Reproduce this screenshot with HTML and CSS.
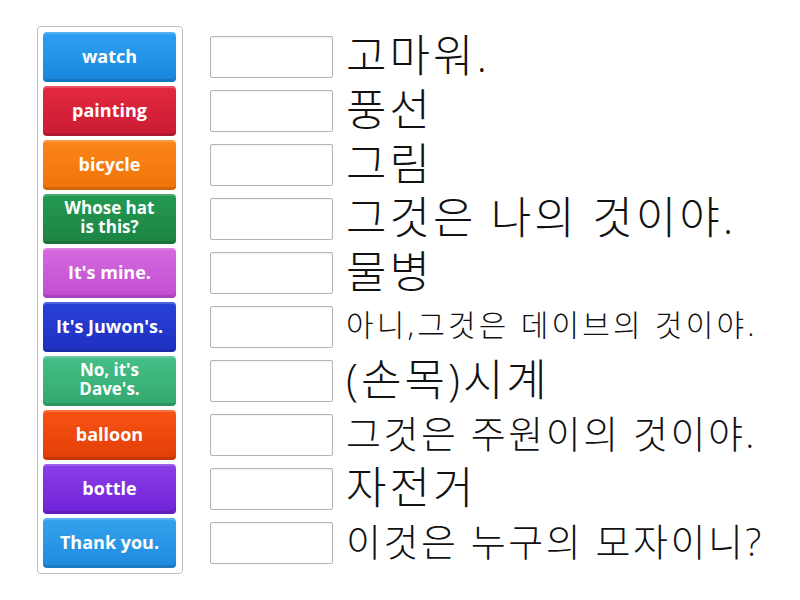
FILE: index.html
```html
<!DOCTYPE html>
<html lang="ko">
<head>
<meta charset="utf-8">
<title>Match up</title>
<link rel="stylesheet" href="styles.css">
</head>
<body>
<div class="stage">
  <div class="bank">
    <div class="tile c-blue">watch</div>
    <div class="tile c-red">painting</div>
    <div class="tile c-orange">bicycle</div>
    <div class="tile c-dgreen two">Whose hat is this?</div>
    <div class="tile c-pink">It's mine.</div>
    <div class="tile c-indigo small">It's Juwon's.</div>
    <div class="tile c-green two">No, it's Dave's.</div>
    <div class="tile c-redorange">balloon</div>
    <div class="tile c-purple">bottle</div>
    <div class="tile c-sky">Thank you.</div>
  </div>
  <div class="targets">
    <div class="row"><div class="slot"></div><div class="label s-xl">고마워.</div></div>
    <div class="row"><div class="slot"></div><div class="label s-xl">풍선</div></div>
    <div class="row"><div class="slot"></div><div class="label s-xl">그림</div></div>
    <div class="row"><div class="slot"></div><div class="label s-xl">그것은 나의 것이야.</div></div>
    <div class="row"><div class="slot"></div><div class="label s-xl">물병</div></div>
    <div class="row"><div class="slot"></div><div class="label s-sm">아니,그것은 데이브의 것이야.</div></div>
    <div class="row"><div class="slot"></div><div class="label s-xl">(손목)시계</div></div>
    <div class="row"><div class="slot"></div><div class="label s-md">그것은 주원이의 것이야.</div></div>
    <div class="row"><div class="slot"></div><div class="label s-xl">자전거</div></div>
    <div class="row"><div class="slot"></div><div class="label s-md">이것은 누구의 모자이니?</div></div>
  </div>
</div>
</body>
</html>
```

FILE: styles.css
```css
html, body {
  margin: 0;
  padding: 0;
  background: #ffffff;
}

.stage {
  display: flex;
  align-items: flex-start;
  padding: 26px 0 0 37px;
  gap: 27px;
  font-family: "Open Sans", "Noto Sans CJK KR", sans-serif;
}

.bank {
  display: flex;
  flex-direction: column;
  gap: 4px;
  padding: 5px 6px 5px 5px;
  border: 1px solid #bdbdbd;
  border-radius: 4px;
}

.tile {
  width: 133px;
  height: 50px;
  box-sizing: border-box;
  display: flex;
  align-items: center;
  justify-content: center;
  text-align: center;
  color: #ffffff;
  font-weight: 700;
  font-size: 18px;
  line-height: 18px;
  border-radius: 4px;
  padding: 0 6px 3px;
  box-shadow: inset 0 -3px 0 rgba(0, 0, 0, 0.12), inset 0 2px 0 rgba(255, 255, 255, 0.18);
}

.tile.two {
  font-size: 17px;
  line-height: 19px;
  padding: 0 16px 4px;
}

.tile.small {
  font-size: 18px;
  padding: 0 1px 3px;
}

.c-blue { background: linear-gradient(#2ea0f2, #1786dc); }
.c-red { background: linear-gradient(#e4293f, #c81b33); }
.c-orange { background: linear-gradient(#fb8619, #f0730a); }
.c-dgreen { background: linear-gradient(#249a52, #1c8343); }
.c-pink { background: linear-gradient(#d66ae0, #c04dcf); }
.c-indigo { background: linear-gradient(#2840d8, #1f30c2); }
.c-green { background: linear-gradient(#45c088, #33a86f); }
.c-redorange { background: linear-gradient(#fa5214, #e03f06); }
.c-purple { background: linear-gradient(#8a3fe8, #6f22d6); }
.c-sky { background: linear-gradient(#35a2ee, #1f8ade); }

.targets {
  display: flex;
  flex-direction: column;
  gap: 4px;
  padding-top: 6px;
}

.row {
  height: 50px;
  display: flex;
  align-items: center;
  gap: 13px;
}

.slot {
  width: 123px;
  height: 42px;
  box-sizing: border-box;
  border: 1px solid #b4b4b4;
  border-radius: 2px;
  background: #ffffff;
  box-shadow: inset 0 1px 2px rgba(0, 0, 0, 0.06);
  flex: none;
}

.label {
  color: #111111;
  white-space: nowrap;
  line-height: 1;
  font-weight: 300;
  margin-top: -4px;
}

.s-xl { font-size: 44px; letter-spacing: 3px; }
.s-md { font-size: 38px; letter-spacing: 2.5px; }
.s-sm { font-size: 30px; letter-spacing: 3.2px; }
```
